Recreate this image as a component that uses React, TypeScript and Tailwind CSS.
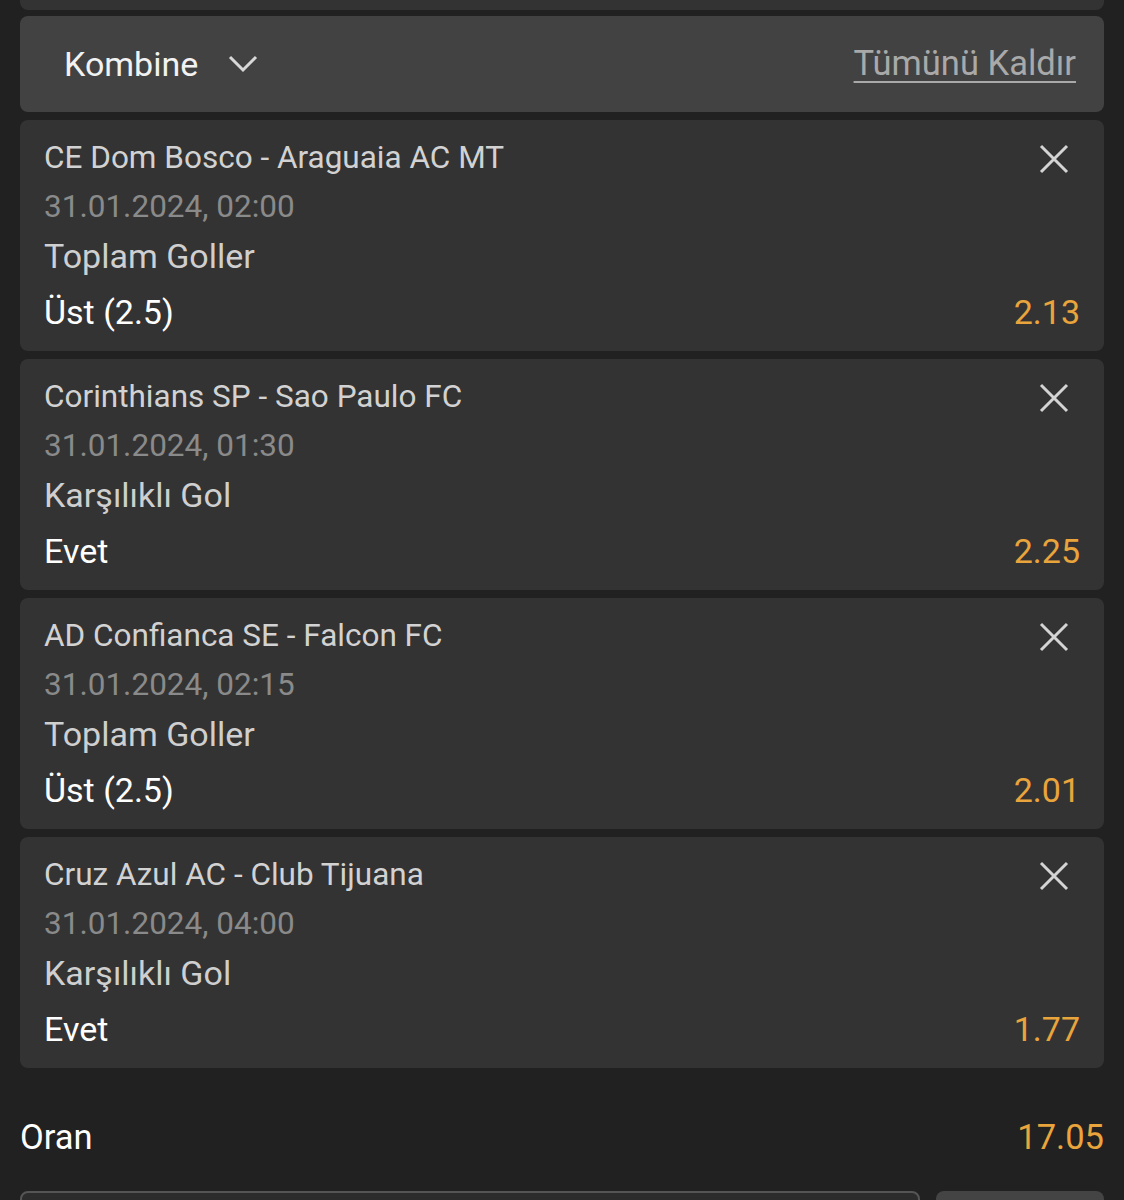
import React from "react";

type Bet = {
  match: string;
  date: string;
  market: string;
  pick: string;
  odd: string;
};

const bets: Bet[] = [
  { match: "CE Dom Bosco - Araguaia AC MT", date: "31.01.2024, 02:00", market: "Toplam Goller", pick: "Üst (2.5)", odd: "2.13" },
  { match: "Corinthians SP - Sao Paulo FC", date: "31.01.2024, 01:30", market: "Karşılıklı Gol", pick: "Evet", odd: "2.25" },
  { match: "AD Confianca SE - Falcon FC", date: "31.01.2024, 02:15", market: "Toplam Goller", pick: "Üst (2.5)", odd: "2.01" },
  { match: "Cruz Azul AC - Club Tijuana", date: "31.01.2024, 04:00", market: "Karşılıklı Gol", pick: "Evet", odd: "1.77" },
];

function CloseIcon() {
  return (
    <svg width="32" height="32" viewBox="0 0 32 32" fill="none">
      <path d="M3 3 L29 29 M29 3 L3 29" stroke="#d4d4d4" strokeWidth="3" strokeLinecap="butt" />
    </svg>
  );
}

function BetCard({ bet }: { bet: Bet }) {
  return (
    <div className="relative h-[231px] rounded-lg bg-[#333333] pl-6 pr-6 pt-[13px]">
      <div className="h-[49px] flex items-center text-[31.5px] text-[#d2d2d2]">{bet.match}</div>
      <div className="h-[49px] flex items-center text-[31.5px] text-[#8a8a8a]">{bet.date}</div>
      <div className="h-[50px] flex items-center text-[34px] text-[#cfcfcf]">{bet.market}</div>
      <div className="mt-[6px] h-[50px] flex items-center justify-between text-[34px] text-white">
        <span>{bet.pick}</span>
        <span className="text-[#eaa43c]">{bet.odd}</span>
      </div>
      <button className="absolute right-[34px] top-[23px]">
        <CloseIcon />
      </button>
    </div>
  );
}

export default function App() {
  return (
    <div
      className="w-[1124px] h-[1200px] overflow-hidden bg-[#212121]"
      style={{ fontFamily: "Roboto, 'Noto Sans', sans-serif" }}
    >
      <div className="mx-5 h-[10px] rounded-b-lg bg-[#333333]" />
      <div className="mx-5 mt-[6px] flex flex-col gap-2">
        <div className="h-[96px] rounded-lg bg-[#424242] flex items-center justify-between pl-11 pr-7">
          <div className="flex items-center gap-[30px]">
            <span className="text-[34px] text-[#f2f2f2]">Kombine</span>
            <svg width="30" height="20" viewBox="0 0 30 20" fill="none">
              <path d="M2 3 L15 16 L28 3" stroke="#d8d8d8" strokeWidth="3" />
            </svg>
          </div>
          <span className="text-[34.5px] text-[#a9a9a9] underline underline-offset-[6px] decoration-2">Tümünü Kaldır</span>
        </div>
        {bets.map((bet, idx) => (
          <BetCard key={idx} bet={bet} />
        ))}
      </div>
      <div className="mx-5 mt-[40px] h-[60px] flex items-center justify-between text-[34.5px]">
        <span className="text-white">Oran</span>
        <span className="text-[#eaa43c]">17.05</span>
      </div>
      <div className="mx-5 mt-[23px] flex gap-4">
        <div className="flex-1 h-[60px] rounded-lg border-2 border-[#555] bg-[#2c2c2c]" />
        <div className="w-[168px] h-[60px] rounded-lg bg-[#444]" />
      </div>
    </div>
  );
}
